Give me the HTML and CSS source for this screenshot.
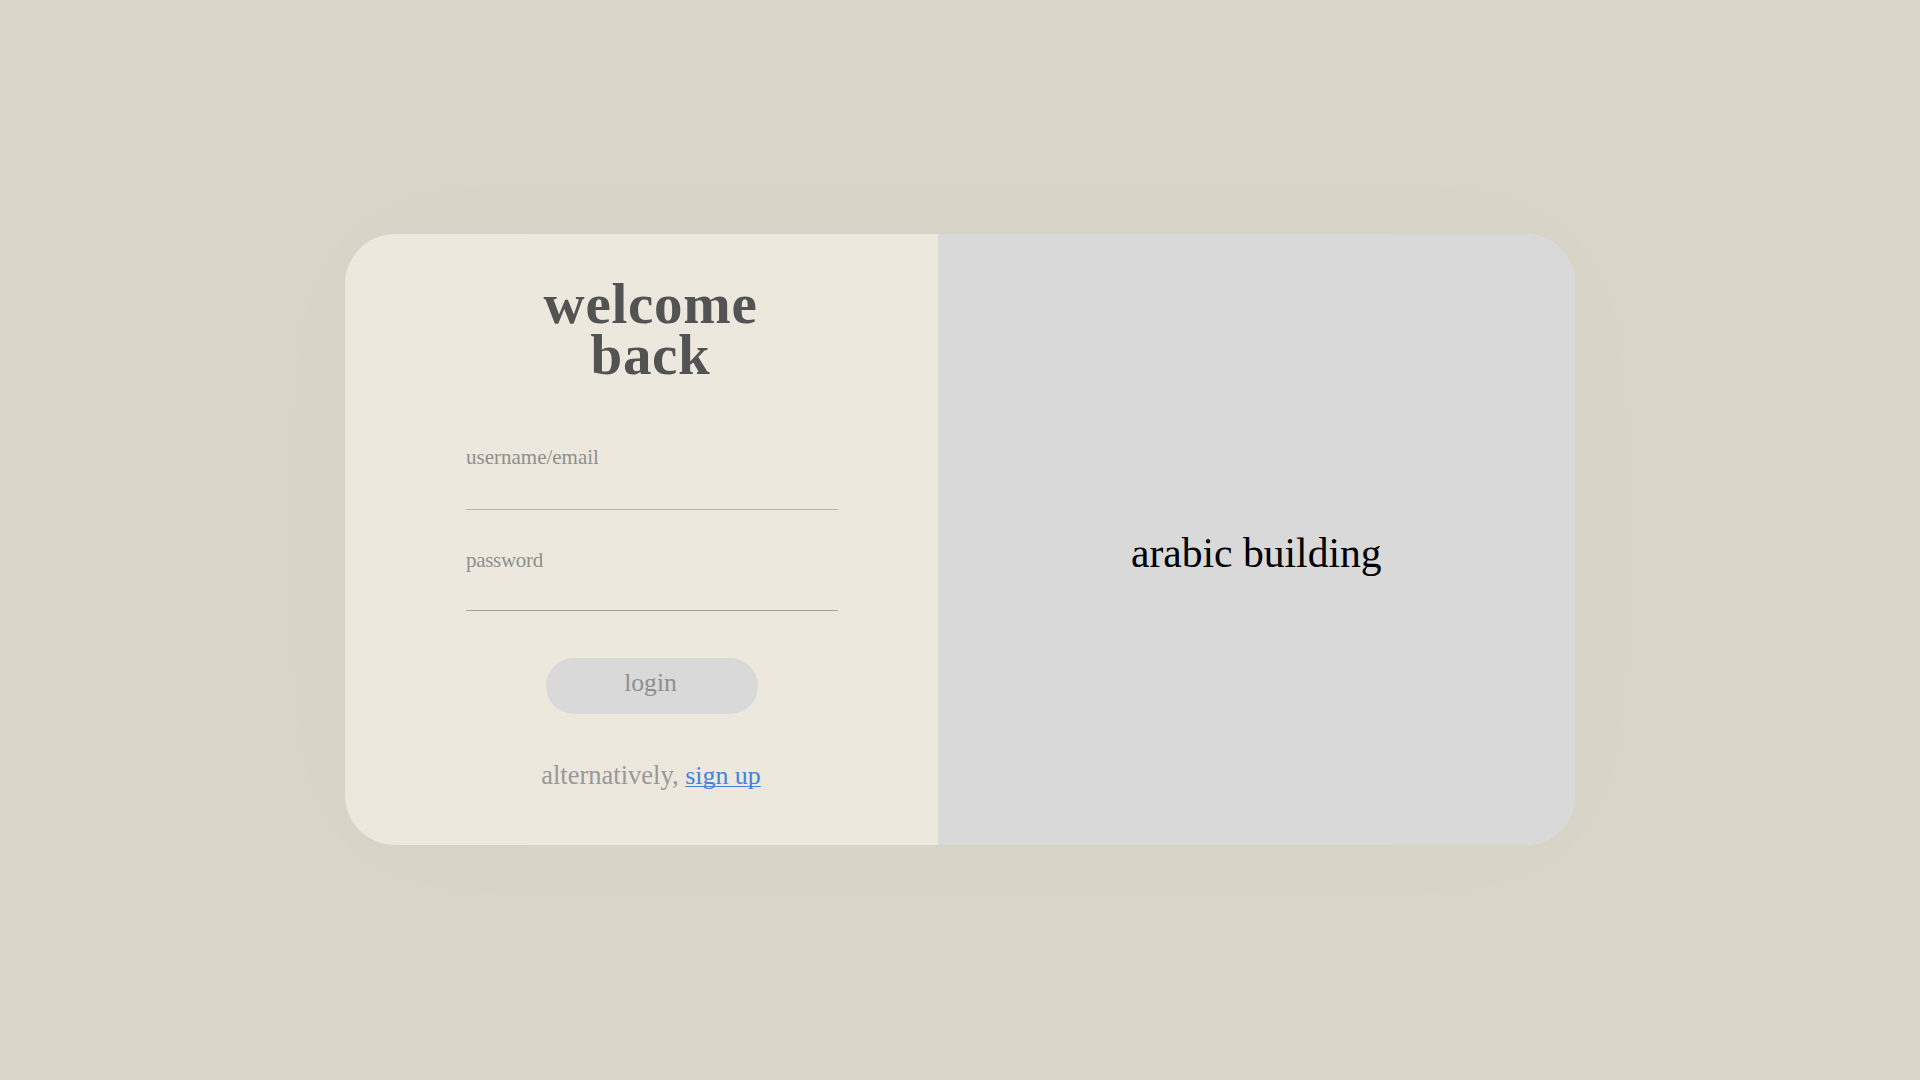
FILE: index.html
```html
<!DOCTYPE html>
<html lang="en">
<head>
<meta charset="utf-8">
<title>Login</title>
<link rel="stylesheet" href="styles.css">
</head>
<body>
<main class="card">
  <form class="login">
    <h1 class="title">welcome<br>back</h1>
    <label class="field"><span class="label username">username/email</span></label>
    <label class="field field-password"><span class="label password">password</span></label>
    <button class="submit" type="button">login</button>
    <p class="alternative"><span class="hint">alternatively,</span> <a class="signup" href="#">sign up</a></p>
  </form>
  <section class="picture">arabic building</section>
</main>
</body>
</html>
```
FILE: styles.css
```css
* {
  box-sizing: border-box;
}

body {
  margin: 0;
  height: 1080px;
  overflow: hidden;
  display: flex;
  justify-content: center;
  align-items: flex-start;
  padding-top: 234px;
  background: #d9d5c8;
  font-family: "Liberation Serif", serif;
}

.card {
  display: flex;
  width: 1230px;
  height: 611px;
  border-radius: 50px;
  overflow: hidden;
  background: #ece8dd;
  box-shadow: 0 0 150px rgba(0, 0, 0, 0.015);
}

.login {
  width: 592.6px;
  padding: 44px 99.6px 0 121px;
  display: flex;
  flex-direction: column;
}

.title {
  margin: 0 0 65px;
  padding-right: 3px;
  font-size: 57px;
  font-weight: bold;
  line-height: 51px;
  letter-spacing: 0.7px;
  text-align: center;
  color: #535353;
}

.field {
  height: 65px;
  border-bottom: 1px solid #b5b5b5;
}

.field-password {
  height: 63px;
  margin-top: 38px;
  border-color: #a3a3a6;
}

.label {
  display: block;
  font-size: 21px;
  line-height: 24px;
  color: #8f8f8c;
}

.password {
  letter-spacing: -0.3px;
}

.submit {
  align-self: center;
  width: 212px;
  height: 56px;
  margin-top: 47px;
  padding: 0 3px 6px 0;
  border: 0;
  border-radius: 28px;
  background: #d9d9d9;
  font-family: inherit;
  font-size: 25.6px;
  line-height: 48px;
  color: #8f8f8f;
}

.alternative {
  margin: 46px 0 0;
  padding-right: 2px;
  font-size: 26.5px;
  line-height: 30px;
  text-align: center;
  white-space: nowrap;
  color: #999997;
}

.signup {
  color: #4382df;
  font-size: 25.9px;
  text-decoration: underline;
  text-decoration-thickness: 1px;
  text-underline-offset: 2px;
  text-decoration-skip-ink: none;
}

.picture {
  flex: 1;
  display: flex;
  justify-content: center;
  align-items: center;
  padding-top: 27px;
  background: #d9d9d9;
  font-size: 41.6px;
  color: #000;
}
```
